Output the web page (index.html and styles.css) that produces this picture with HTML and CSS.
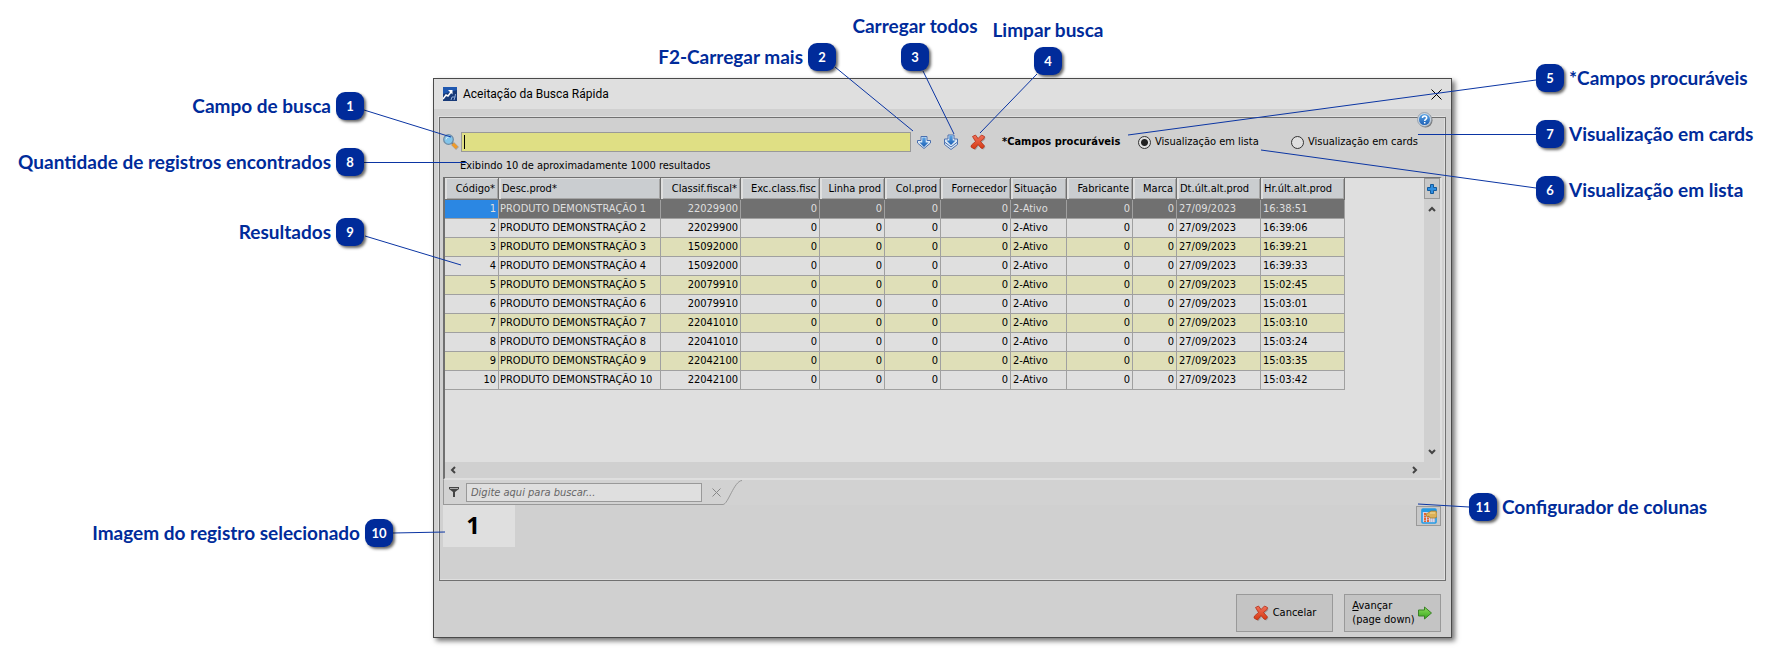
FILE: index.html
```html
<!DOCTYPE html>
<html lang="pt-BR">
<head>
<meta charset="utf-8">
<title>Aceitação da Busca Rápida</title>
<link rel="stylesheet" href="styles.css">
</head>
<body>
<svg class="defs" width="0" height="0" aria-hidden="true">
  <defs>
    <linearGradient id="red" x1="0" y1="0" x2="0" y2="1"><stop offset="0" stop-color="#f0705a"/><stop offset="1" stop-color="#d63a12"/></linearGradient>
    <linearGradient id="blue" x1="0" y1="0" x2="0" y2="1"><stop offset="0" stop-color="#5ba4e6"/><stop offset="1" stop-color="#1c5fb4"/></linearGradient>
    <linearGradient id="green" x1="0" y1="0" x2="0" y2="1"><stop offset="0" stop-color="#8fe05c"/><stop offset="1" stop-color="#35a51c"/></linearGradient>
    <symbol id="cross" viewBox="0 0 16 16"><path d="M2.500 2.500L5.500 1 8 4.500 11.500 1 14.500 2.500 14 4.500 10.500 7.500 14.500 12 12.500 14.500 11 14 8 10.500 4.500 15 1 13 1.500 11 5.500 7.500Z" fill="#777" opacity=".5" transform="translate(1 1)"/><path d="M2.500 2.500L5.500 1 8 4.500 11.500 1 14.500 2.500 14 4.500 10.500 7.500 14.500 12 12.500 14.500 11 14 8 10.500 4.500 15 1 13 1.500 11 5.500 7.500Z" fill="url(#red)" stroke="#b52d14" stroke-width=".8" stroke-linejoin="round"/></symbol>
  </defs>
</svg>
<main class="stage">
  <section class="window" aria-label="Aceitação da Busca Rápida">
    <header class="titlebar">
      <svg class="app-icon" viewBox="0 0 14 14"><path fill="#1f58b0" d="M0 0h14v14H0z"/><path fill="#173a78" d="M0 7L14 3v11H0z"/><path d="M0 12L3 8l2 1 3-4" fill="none" stroke="#fff" stroke-width="1.500"/><path d="M5 3h4.500v4.500z" fill="#fff"/><path d="M8 13l1-3h3M11 13l1-3 .5-3" fill="none" stroke="#8fabd8"/></svg>
      <h1>Aceitação da Busca Rápida</h1>
      <button class="close" aria-label="Fechar"><svg width="11" height="11" viewBox="0 0 11 11"><path d="M.5.5l10 10M10.500.5l-10 10" stroke="#000" fill="none"/></svg></button>
    </header>
    <div class="panel">
      <button class="help" aria-label="Ajuda"><svg width="16" height="16" viewBox="0 0 16 16"><circle cx="8.500" cy="8.500" r="7" fill="#777"/><circle cx="7.500" cy="7.500" r="7" fill="#c8d4e0" stroke="#8d98a6" stroke-width=".8"/><circle cx="7.500" cy="7.500" r="5.500" fill="url(#blue)"/><path d="M5.500 6c0-2.600 4.200-2.600 4.200 0 0 1.500-2 1.300-2 3M7.700 10v1.400" fill="none" stroke="#fff" stroke-width="1.500"/></svg></button>
      <form class="search">
        <svg class="lens" viewBox="0 0 16 16"><path d="M9.500 9.500l5 5" stroke="#777" stroke-width="4" opacity=".5"/><path d="M8.500 8.500L10 10" stroke="#777" stroke-width="2"/><path d="M9.800 9.800l4 4" stroke="#f09a28" stroke-width="3.200"/><circle cx="5.500" cy="5.500" r="4.800" fill="#83c5ea" stroke="#6f8ca5" stroke-width="1.300"/><path d="M3 5.500A3 3 0 0 1 6 2.800" fill="none" stroke="#dff1fb"/></svg>
        <span class="query"><input type="text" aria-label="Campo de busca"><i class="caret"></i></span>
        <button type="button" class="tool" aria-label="Carregar mais"><svg viewBox="0 0 16 16"><path d="M5 2.500h6v4h3.500V9L8 14.500 1.500 9V6.500H5z" fill="#dce9f5" stroke="#4a6fae"/><path d="M6.300 3.500h3.400v5h2.800L8 13 3.500 8.500h2.800z" fill="url(#blue)"/></svg></button>
        <button type="button" class="tool" aria-label="Carregar todos"><svg viewBox="0 0 16 16"><path d="M1.500 7v3.500L8 15.500l6.500-5V7" fill="#dce9f5" stroke="#4a6fae"/><path d="M5 1h6v4h3.500v3L8 13 1.500 8V5H5z" fill="#dce9f5" stroke="#4a6fae"/><path d="M6.300 1.500h3.400v5h2.800L8 11 3.500 6.500h2.800z" fill="url(#blue)"/></svg></button>
        <button type="button" class="tool clear" aria-label="Limpar busca"><svg viewBox="0 0 16 16"><use href="#cross"/></svg></button>
        <strong>*Campos procuráveis</strong>
        <label class="list-view"><input type="radio" name="view" checked>Visualização em lista</label>
        <label class="card-view"><input type="radio" name="view">Visualização em cards</label>
      </form>
      <p class="count">Exibindo 10 de aproximadamente 1000 resultados</p>
      <div class="grid">
        <div class="viewport">
          <table>
            <colgroup><col class="w54"><col class="w162"><col class="w80"><col class="w79"><col class="w65"><col class="w56"><col class="w70"><col class="w56"><col class="w66"><col class="w44"><col class="w84"><col class="w84"></colgroup>
            <thead><tr><th class="n">Código*</th><th>Desc.prod*</th><th class="n">Classif.fiscal*</th><th class="n">Exc.class.fisc</th><th class="n">Linha prod</th><th class="n">Col.prod</th><th class="n">Fornecedor</th><th>Situação</th><th class="n">Fabricante</th><th class="n">Marca</th><th>Dt.últ.alt.prod</th><th>Hr.últ.alt.prod</th></tr></thead>
            <tbody id="rows"></tbody>
          </table>
        </div>
        <div class="vscroll">
          <button class="plus" aria-label="Adicionar"><svg width="10" height="10" viewBox="0 0 10 10"><path d="M3.500.5h3v3h3v3h-3v3h-3v-3h-3v-3h3z" fill="#2f8ee0" stroke="#135a9c"/></svg></button>
          <svg width="8" height="8" viewBox="0 0 8 8"><path d="M1 6l3-3 3 3" fill="none" stroke="#444" stroke-width="2"/></svg>
          <svg class="down" width="8" height="8" viewBox="0 0 8 8"><path d="M1 2l3 3 3-3" fill="none" stroke="#444" stroke-width="2"/></svg>
        </div>
        <div class="hscroll">
          <svg width="8" height="8" viewBox="0 0 8 8"><path d="M6 1L3 4l3 3" fill="none" stroke="#444" stroke-width="2"/></svg>
          <svg width="8" height="8" viewBox="0 0 8 8"><path d="M2 1l3 3-3 3" fill="none" stroke="#444" stroke-width="2"/></svg>
        </div>
      </div>
      <div class="filter">
        <div class="filter-box">
          <svg width="10" height="12" viewBox="0 0 10 12"><path d="M0 1h10v2L6 6v5H4V6L0 3z" fill="#444"/><path d="M1 2.500h8" stroke="#aaa"/></svg>
          <input type="text" aria-label="Filtro" placeholder="Digite aqui para buscar...">
          <button aria-label="Limpar filtro"><svg width="9" height="9" viewBox="0 0 9 9"><path d="M.5.5l8 8M8.500.5l-8 8" stroke="#888" fill="none"/></svg></button>
        </div>
        <svg class="slant" width="20" height="25" viewBox="0 0 20 25"><path d="M0 24.500C5 24.500 11 1 19 .5" fill="none" stroke="#999"/></svg>
      </div>
      <div class="bottom">
        <div class="thumb">1</div>
        <button class="config" aria-label="Configurador de colunas"><svg width="16" height="16" viewBox="0 0 16 16"><rect x="1" y="1" width="14" height="14" rx="1" fill="#d5d5ea" stroke="#249be4" stroke-width="1.600"/><path d="M1 1h14v3H1z" fill="#249be4"/><path d="M4 5v9M7 7v7" stroke="#e4632f" stroke-width="2" stroke-dasharray="2 .5"/><path d="M9 11h5M9 13h5" stroke="#aab" stroke-dasharray="1 1"/><path d="M5 6l2-1 3-2h5l1 2v4l-2 1H9L8 8 6 9z" fill="#dcb157" stroke="#9b7730" stroke-width=".7"/><path d="M9 5h5" stroke="#f6dfa0"/></svg></button>
      </div>
    </div>
    <footer class="actions">
      <button class="cancel"><svg viewBox="0 0 16 16"><use href="#cross"/></svg>Cancelar</button>
      <button class="next"><span><u>A</u>vançar<br>(page down)</span><svg viewBox="0 0 16 16"><path d="M1.500 5h6V2l7 6-7 6v-3h-6z" fill="url(#green)" stroke="#3a8027"/></svg></button>
    </footer>
  </section>

  <svg class="leaders" width="1772" height="654" viewBox="0 0 1772 654" aria-hidden="true">
    <path d="M364 110L451 137M364 162.500H467M365 236L461 265M835 67L913 131M923 71L954 134M1037 74L980 133M1536 80L1128 135M1418 134.500H1536M1536 188L1261 150M393 533L445 532M1469 507L1418 504"/>
  </svg>
  <div class="callout left c1"><span>Campo de busca</span><b>1</b></div>
  <div class="callout left c8"><span>Quantidade de registros encontrados</span><b>8</b></div>
  <div class="callout left c9"><span>Resultados</span><b>9</b></div>
  <div class="callout left c10"><span>Imagem do registro selecionado</span><b>10</b></div>
  <div class="callout left c2"><span>F2-Carregar mais</span><b>2</b></div>
  <div class="callout top c3"><span>Carregar todos</span><b>3</b></div>
  <div class="callout top c4"><span>Limpar busca</span><b>4</b></div>
  <div class="callout c5"><b>5</b><span>*Campos procuráveis</span></div>
  <div class="callout c7"><b>7</b><span>Visualização em cards</span></div>
  <div class="callout c6"><b>6</b><span>Visualização em lista</span></div>
  <div class="callout c11"><b>11</b><span>Configurador de colunas</span></div>
</main>
<script src="rows.js"></script>
</body>
</html>
```
FILE: rows.js
```js
const products = [
  ["22029900", "16:38:51"], ["22029900", "16:39:06"], ["15092000", "16:39:21"],
  ["15092000", "16:39:33"], ["20079910", "15:02:45"], ["20079910", "15:03:01"],
  ["22041010", "15:03:10"], ["22041010", "15:03:24"], ["22042100", "15:03:35"],
  ["22042100", "15:03:42"]
];
const zero = '<td class="n">0</td>';
document.getElementById("rows").innerHTML = products.map(([code, time], i) =>
  `<tr${i === 0 ? ' class="selected"' : ""}><td class="n">${i + 1}</td><td>PRODUTO DEMONSTRAÇÃO ${i + 1}</td><td class="n">${code}</td>${zero.repeat(4)}<td>2-Ativo</td>${zero.repeat(2)}<td>27/09/2023</td><td>${time}</td></tr>`
).join("");
```
FILE: styles.css
```css
* { box-sizing: border-box; }
body { margin: 0; background: #fff; }
body, button, input { font: 11px/14px "DejaVu Sans Condensed", "DejaVu Sans", sans-serif; color: #000; }
button { padding: 0; border: 0; background: none; }
svg { display: block; flex: none; }
.defs { position: absolute; }
.stage { position: relative; padding: 78px 320px 15px 433px; }
.window { display: flex; flex-direction: column; border: 1px solid #4a4a4a; background: #d0d0d0; box-shadow: 3px 3px 5px rgba(0, 0, 0, .55); }

.titlebar { display: flex; align-items: center; height: 30px; padding: 0 9px; background: #dfdfdf; }
.app-icon { width: 14px; height: 14px; }
h1 { flex: 1; margin: 0 0 0 6px; font: 12px/16px Roboto, sans-serif; }

.panel { position: relative; display: flex; flex-direction: column; margin: 8px 5px 0; padding: 0 3px 33px; border: 1px solid #707070; box-shadow: -1px -1px #dfdfdf, inset -1px -1px #dfdfdf; }
.help { position: absolute; top: -6px; right: 12px; }

.search { display: flex; align-items: center; margin-top: 12px; height: 24px; }
.lens { width: 16px; height: 16px; }
.query { position: relative; flex: 1; margin: 0 3px 0 2px; }
.query input { display: block; width: 100%; height: 20px; border: 1px solid #999; background: #dfdf84; }
.caret { position: absolute; left: 3px; top: 3px; width: 1px; height: 14px; background: #000; }
.tool { margin: 0 9px 0 2px; }
.clear { margin-right: 16px; }
.tool svg { width: 16px; height: 16px; }
.search label { display: flex; align-items: center; white-space: nowrap; }
.search label input { appearance: none; width: 13px; height: 13px; margin: 0 4px 0 0; border: 1px solid #333; border-radius: 50%; background: #dfdfdf; }
.search label input:checked { background: radial-gradient(#222 0 3px, #dfdfdf 4px); }
.search strong { width: 122px; white-space: nowrap; }
.list-view { width: 153px; margin-left: 14px; }
.card-view { width: 151px; }
.count { margin: 5px 0 4px 17px; line-height: 14px; }

.grid { display: grid; grid-template-columns: 1fr 16px; grid-template-rows: 1fr 16px; border: 1px solid #707070; border-right: 2px solid #dfdfdf; border-bottom: 2px solid #dfdfdf; border-left-width: 2px; background: #dfdfdf; }
.viewport { min-height: 284px; overflow: hidden; }
table { table-layout: fixed; width: 900px; border-collapse: separate; border-spacing: 0; }
.w54 { width: 54px; } .w162 { width: 162px; } .w80 { width: 80px; } .w79 { width: 79px; }
.w65 { width: 65px; } .w56 { width: 56px; } .w70 { width: 70px; } .w66 { width: 66px; }
.w44 { width: 44px; } .w84 { width: 84px; }
th, td { padding: 0 2px; overflow: hidden; font-weight: normal; text-align: left; white-space: nowrap; }
th { height: 22px; padding: 0 3px; border-right: 1px solid #707070; border-bottom: 1px solid #707070; background: #cacdd0; box-shadow: inset 2px 1px #dfdfdf, inset -1px -1px #a5a5a5; }
td { height: 19px; border-right: 1px solid #a0a0a0; border-bottom: 1px solid #a0a0a0; }
td:nth-child(2) { padding-left: 1px; }
.n { text-align: right; }
tbody tr:nth-child(odd) { background: #dfdfb8; }
tbody tr.selected { background: #707070; color: #dfdfdf; }
.selected td:first-child { background: #2b87e3; }
.vscroll { display: flex; flex-direction: column; align-items: center; background: #d0d0d0; padding-bottom: 6px; }
.plus { display: grid; place-items: center; width: 16px; height: 21px; margin-bottom: 6px; border: 1px solid #999; background: #c8c8c8; }
.down { margin-top: auto; }
.hscroll { grid-column: 1 / -1; display: flex; justify-content: space-between; align-items: center; padding: 0 21px 0 4px; background: #d0d0d0; }

.filter { display: flex; background: #d2d2d2; }
.filter-box { display: flex; align-items: center; width: 280px; height: 25px; padding-left: 5px; border-left: 1px solid #999; border-bottom: 1px solid #999; }
.filter-box input { width: 236px; height: 19px; margin: 0 10px 0 7px; padding: 0 4px; border: 1px solid #999; background: #dfdfdf; }
.filter-box input::placeholder { color: #666; font-style: italic; }
.bottom { display: flex; justify-content: space-between; align-items: flex-start; padding-right: 1px; }
.thumb { width: 72px; height: 42px; padding-right: 12px; background: #dfdfdf; font: bold 24px/40px "Open Sans", sans-serif; text-align: center; }
.config { display: grid; place-items: center; width: 25px; height: 20px; margin-top: 1px; border: 1px solid #999; background: #c8c8c8; }

.actions { display: flex; justify-content: flex-end; gap: 11px; padding: 13px 10px 5px; }
.actions button { display: flex; align-items: center; justify-content: center; width: 97px; height: 38px; gap: 4px; border: 1px solid #999; background: #c4c4c4; text-align: left; }
.actions svg { width: 16px; height: 16px; }
.actions .next { gap: 2px; }

.leaders { position: absolute; left: 0; top: 0; }
.leaders path { fill: none; stroke: #0b35a3; stroke-width: 1; }
.callout { position: absolute; display: flex; align-items: center; gap: 5px; color: #002b9a; font: bold 19px/28px Lato, sans-serif; white-space: nowrap; }
.callout b { flex: none; width: 28px; height: 28px; border-radius: 9px; background: #002b9a; box-shadow: 2px 2px 3px rgba(0, 0, 0, .6); color: #fff; font: bold 13px/28px Lato, sans-serif; text-align: center; }
.left { left: 0; width: 364px; justify-content: flex-end; }
.top { flex-direction: column; gap: 3px; width: 140px; }
.c1 { top: 92px; }
.c8 { top: 148px; }
.c9 { top: 218px; }
.c10 { top: 519px; width: 393px; }
.c2 { top: 43px; width: 836px; }
.c3 { top: 12px; left: 845px; }
.c4 { top: 16px; left: 978px; }
.c5 { top: 64px; left: 1536px; }
.c7 { top: 120px; left: 1536px; }
.c6 { top: 176px; left: 1536px; }
.c11 { top: 493px; left: 1469px; }
```
